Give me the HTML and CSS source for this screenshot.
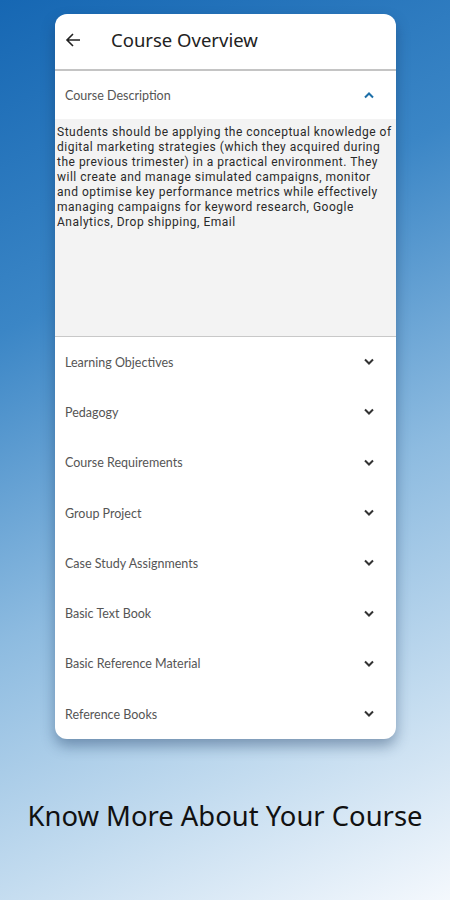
FILE: index.html
```html
<!DOCTYPE html>
<html>
<head>
<meta charset="utf-8">
<link rel="stylesheet" href="styles.css">
</head>
<body>
<div class="page">
  <div class="card">
    <div class="appbar">
      <svg class="back" width="16" height="16" viewBox="0 0 16 16"><path d="M15 8H2M8 2L2 8l6 6" fill="none" stroke="#222" stroke-width="1.6"/></svg>
      <span class="title">Course Overview</span>
    </div>
    <div class="row open">
      <span class="label">Course Description</span>
      <svg class="chev" width="12" height="8" viewBox="0 0 12 8"><path d="M2 6.5L6 2.5l4 4" fill="none" stroke="#1d6fa8" stroke-width="2"/></svg>
    </div>
    <div class="desc">Students should be applying the conceptual knowledge of digital marketing strategies (which they acquired during the previous trimester) in a practical environment. They will create and manage simulated campaigns, monitor and optimise key performance metrics while effectively managing campaigns for keyword research, Google Analytics, Drop shipping, Email</div>
    <div class="row"><span class="label">Learning Objectives</span><svg class="chev" width="12" height="8" viewBox="0 0 12 8"><path d="M2 1.5L6 5.5l4-4" fill="none" stroke="#333" stroke-width="2"/></svg></div>
    <div class="row"><span class="label">Pedagogy</span><svg class="chev" width="12" height="8" viewBox="0 0 12 8"><path d="M2 1.5L6 5.5l4-4" fill="none" stroke="#333" stroke-width="2"/></svg></div>
    <div class="row"><span class="label">Course Requirements</span><svg class="chev" width="12" height="8" viewBox="0 0 12 8"><path d="M2 1.5L6 5.5l4-4" fill="none" stroke="#333" stroke-width="2"/></svg></div>
    <div class="row"><span class="label">Group Project</span><svg class="chev" width="12" height="8" viewBox="0 0 12 8"><path d="M2 1.5L6 5.5l4-4" fill="none" stroke="#333" stroke-width="2"/></svg></div>
    <div class="row"><span class="label">Case Study Assignments</span><svg class="chev" width="12" height="8" viewBox="0 0 12 8"><path d="M2 1.5L6 5.5l4-4" fill="none" stroke="#333" stroke-width="2"/></svg></div>
    <div class="row"><span class="label">Basic Text Book</span><svg class="chev" width="12" height="8" viewBox="0 0 12 8"><path d="M2 1.5L6 5.5l4-4" fill="none" stroke="#333" stroke-width="2"/></svg></div>
    <div class="row"><span class="label">Basic Reference Material</span><svg class="chev" width="12" height="8" viewBox="0 0 12 8"><path d="M2 1.5L6 5.5l4-4" fill="none" stroke="#333" stroke-width="2"/></svg></div>
    <div class="row"><span class="label">Reference Books</span><svg class="chev" width="12" height="8" viewBox="0 0 12 8"><path d="M2 1.5L6 5.5l4-4" fill="none" stroke="#333" stroke-width="2"/></svg></div>
  </div>
  <h1 class="tagline">Know More About Your Course</h1>
</div>
</body>
</html>
```
FILE: styles.css
```css
html, body {
  margin: 0;
  padding: 0;
}
body {
  width: 450px;
  height: 900px;
  overflow: hidden;
  background: linear-gradient(155deg, #1667b3 0%, #3b86c6 30%, #8dbbe0 58%, #c2dbef 80%, #f4f8fd 100%);
  font-family: "Noto Sans", sans-serif;
}
.page {
  padding: 14px 54px 0 55px;
}
.card {
  background: #fff;
  border-radius: 12px;
  box-shadow: 0 7px 14px rgba(20, 50, 90, 0.4);
  overflow: hidden;
}
.appbar {
  height: 57px;
  box-sizing: border-box;
  padding-bottom: 4px;
  display: flex;
  align-items: center;
  border-bottom: 2px solid #c4c4c4;
}
.back {
  margin-left: 10px;
  margin-right: 30px;
}
.title {
  font-family: "Noto Sans", sans-serif;
  font-size: 18.5px;
  color: #222;
}
.row {
  height: 50.3px;
  display: flex;
  align-items: center;
  justify-content: space-between;
  padding: 0 21px 0 10px;
}
.row.open {
  height: 48px;
}
.label {
  font-family: "Lato", sans-serif;
  font-size: 12.5px;
  color: #555;
}
.desc {
  background: #f3f3f3;
  height: 218px;
  box-sizing: border-box;
  padding: 6px 2px 0 2px;
  font-family: "Roboto", sans-serif;
  font-size: 12px;
  letter-spacing: 0.5px;
  line-height: 15px;
  color: #2a2a2a;
  border-bottom: 1px solid #c8c8c8;
}
.tagline {
  margin: 60px 0 0 -55px;
  width: 450px;
  text-align: center;
  font-family: "Noto Sans", sans-serif;
  font-weight: 400;
  font-size: 27.4px;
  line-height: 34px;
  color: #111;
}
```
